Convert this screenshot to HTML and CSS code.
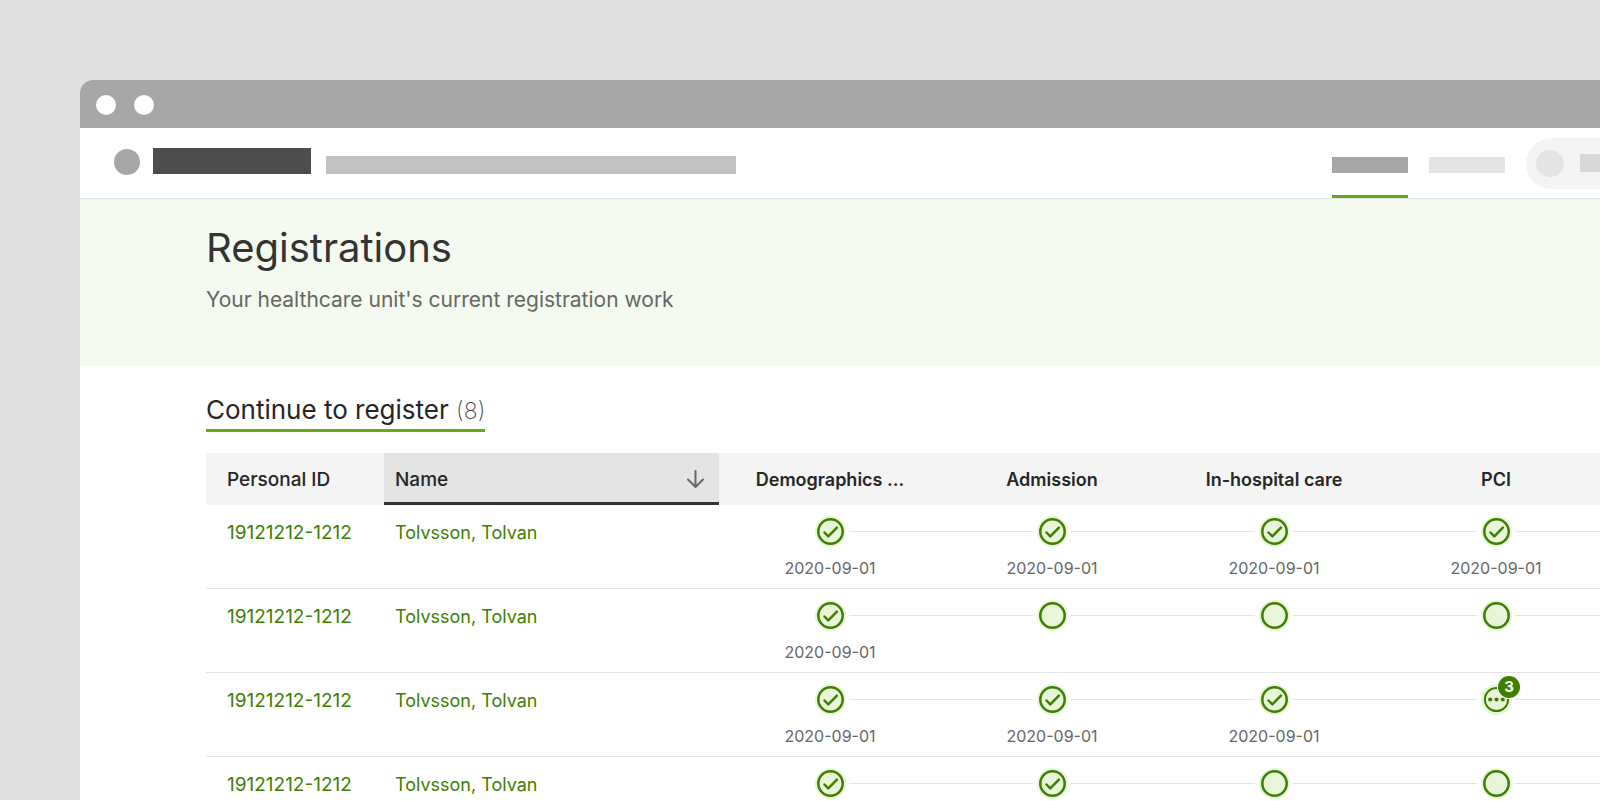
FILE: index.html
```html
<!DOCTYPE html>
<html lang="en">
<head>
<meta charset="utf-8">
<title>Registrations</title>
<link rel="stylesheet" href="styles.css">
</head>
<body>
<svg class="sprite" aria-hidden="true">
  <symbol id="done" viewBox="0 0 32 32">
    <circle cx="16.500" cy="16.500" r="15.5" fill="#e8f5d8"/>
    <circle cx="16.500" cy="16.500" r="12.2" fill="none" stroke="#3d8000" stroke-width="2.5"/>
    <path d="M10.500 17.500l3.800 3.900 8.600-8.700" fill="none" stroke="#3d8000" stroke-width="2.5" stroke-linecap="round" stroke-linejoin="round"/>
  </symbol>
  <symbol id="empty" viewBox="0 0 32 32">
    <circle cx="16.500" cy="16.500" r="15.5" fill="#e8f5d8"/>
    <circle cx="16.500" cy="16.500" r="12.2" fill="none" stroke="#3d8000" stroke-width="2.5"/>
  </symbol>
  <symbol id="partial" viewBox="0 0 32 32">
    <circle cx="16.500" cy="16.500" r="15.5" fill="#e8f5d8"/>
    <circle cx="16.500" cy="16.500" r="11.6" fill="none" stroke="#3d8000" stroke-width="2"/>
    <g fill="#3d8000"><circle cx="10.2" cy="16.500" r="2.1"/><circle cx="16.500" cy="16.500" r="2.1"/><circle cx="22.8" cy="16.500" r="2.1"/></g>
  </symbol>
</svg>
<div class="stage">
  <div class="window">
    <div class="titlebar"><span class="dot"></span><span class="dot"></span></div>
    <header class="topbar">
      <span class="logo"></span>
      <span class="brand"></span>
      <span class="tagline"></span>
      <nav class="tabs">
        <span class="tab tab-active"></span>
        <span class="tab"></span>
      </nav>
      <div class="user"><span class="avatar"></span><span class="username"></span></div>
    </header>
    <section class="hero">
      <h1>Registrations</h1>
      <p>Your healthcare unit's current registration work</p>
    </section>
    <main class="content">
      <h2>Continue to register <span class="count">(8)</span></h2>
      <table class="grid">
        <colgroup><col class="col-id"><col class="col-name"><col><col><col><col></colgroup>
        <thead>
          <tr>
            <th class="id">Personal ID</th>
            <th class="name sorted"><button type="button">Name
              <svg width="20" height="20" viewBox="0 0 20 20" fill="none" stroke="#666" stroke-width="2" stroke-linecap="round" stroke-linejoin="round" aria-hidden="true"><path d="M9.500 2v16M2 10.500L9.500 18l7.500-7.500"/></svg>
            </button></th>
            <th>Demographics ...</th><th>Admission</th><th>In-hospital care</th><th>PCI</th>
          </tr>
        </thead>
        <tbody>
          <tr>
            <td class="id"><a href="#">19121212-1212</a></td><td class="name"><a href="#">Tolvsson, Tolvan</a></td>
            <td><div class="step first"><svg class="mark"><use href="#done"/></svg></div><time>2020-09-01</time></td>
            <td><div class="step"><svg class="mark"><use href="#done"/></svg></div><time>2020-09-01</time></td>
            <td><div class="step"><svg class="mark"><use href="#done"/></svg></div><time>2020-09-01</time></td>
            <td><div class="step"><svg class="mark"><use href="#done"/></svg></div><time>2020-09-01</time></td>
          </tr>
          <tr>
            <td class="id"><a href="#">19121212-1212</a></td><td class="name"><a href="#">Tolvsson, Tolvan</a></td>
            <td><div class="step first"><svg class="mark"><use href="#done"/></svg></div><time>2020-09-01</time></td>
            <td><div class="step"><svg class="mark"><use href="#empty"/></svg></div></td>
            <td><div class="step"><svg class="mark"><use href="#empty"/></svg></div></td>
            <td><div class="step"><svg class="mark"><use href="#empty"/></svg></div></td>
          </tr>
          <tr>
            <td class="id"><a href="#">19121212-1212</a></td><td class="name"><a href="#">Tolvsson, Tolvan</a></td>
            <td><div class="step first"><svg class="mark"><use href="#done"/></svg></div><time>2020-09-01</time></td>
            <td><div class="step"><svg class="mark"><use href="#done"/></svg></div><time>2020-09-01</time></td>
            <td><div class="step"><svg class="mark"><use href="#done"/></svg></div><time>2020-09-01</time></td>
            <td><div class="step"><span class="badged"><svg class="mark"><use href="#partial"/></svg><span class="badge">3</span></span></div></td>
          </tr>
          <tr>
            <td class="id"><a href="#">19121212-1212</a></td><td class="name"><a href="#">Tolvsson, Tolvan</a></td>
            <td><div class="step first"><svg class="mark"><use href="#done"/></svg></div></td>
            <td><div class="step"><svg class="mark"><use href="#done"/></svg></div></td>
            <td><div class="step"><svg class="mark"><use href="#empty"/></svg></div></td>
            <td><div class="step"><svg class="mark"><use href="#empty"/></svg></div></td>
          </tr>
        </tbody>
      </table>
    </main>
  </div>
</div>
</body>
</html>
```
FILE: styles.css
```css
* { box-sizing: border-box; }
html { overflow: hidden; }
body {
  margin: 0;
  height: 100vh;
  padding-bottom: 1px;
  background: #fff;
  color: #262626;
  font-family: Inter, "Liberation Sans", sans-serif;
  overflow: hidden;
}
.sprite { display: none; }
.stage {
  height: 100%;
  padding: 80px 0 0 80px;
  background: #e0e0e0;
  overflow: hidden;
}
.window {
  height: 100%;
  background: #fff;
  border-top-left-radius: 13px;
  overflow: hidden;
}
.titlebar {
  display: flex;
  align-items: center;
  gap: 18px;
  height: 48px;
  padding: 1px 16px 0;
  background: #a6a6a6;
}
.dot { width: 20px; height: 20px; border-radius: 50%; background: #fff; }

.topbar {
  display: flex;
  height: 71px;
  border-bottom: 1px solid #e4e4e4;
}
.topbar > * { flex: none; }
.logo { width: 26px; height: 26px; margin: 21px 13px 0 34px; border-radius: 50%; background: #a6a6a6; }
.brand { width: 158px; height: 26px; margin: 20px 15px 0 0; background: #4d4d4d; }
.tagline { width: 410px; height: 18px; margin-top: 28px; background: #c2c2c2; }
.tabs { display: flex; gap: 21px; margin-left: auto; }
.tab { width: 76px; }
.tab::before { content: ""; display: block; height: 16px; margin-top: 29px; background: #e4e4e4; }
.tab-active { border-bottom: 3px solid #65a818; }
.tab-active::before { background: #a6a6a6; }
.user {
  display: flex;
  align-items: center;
  gap: 16px;
  width: 74px;
  height: 51px;
  margin: 10px 0 0 21px;
  padding: 0 0 1px 10px;
  border-radius: 26px 0 0 26px;
  background: #f4f4f4;
  overflow: hidden;
}
.avatar { flex: none; width: 28px; height: 27px; border-radius: 50%; background: #e4e4e4; }
.username { flex: none; width: 80px; height: 18px; background: #d8d8d8; }

.hero { height: 167px; padding: 21px 126px 0; background: #f4faf0; }
h1 { margin: 0; font-size: 40px; line-height: 56px; font-weight: 400; color: #333; }
.hero p { margin: 11px 0 0; font-size: 21px; line-height: 26px; color: #666; }

.content { padding: 28px 0 0 126px; }
h2 {
  width: fit-content;
  margin: 0 0 21px;
  padding-bottom: 4px;
  border-bottom: 3px solid #65a818;
  font-size: 26px;
  line-height: 31px;
  font-weight: 400;
}
.count { font-size: 23px; line-height: 1; font-weight: 200; color: #444; }

.grid {
  width: 100%;
  min-width: 1401px;
  border-collapse: separate;
  border-spacing: 0;
  table-layout: fixed;
}
.col-id { width: 178px; }
.col-name { width: 335px; }
th {
  height: 52px;
  padding: 0;
  background: #f4f4f4;
  font-size: 18px;
  font-weight: 600;
  text-align: center;
}
th.id, th.name { font-size: 19px; font-weight: 500; }
.id { padding-left: 21px; text-align: left; }
.name { text-align: left; }
td.name { padding-left: 11px; }
.sorted { background: #e4e4e4; border-bottom: 3px solid #333; }
.sorted button {
  display: flex;
  align-items: center;
  justify-content: space-between;
  width: 100%;
  height: 49px;
  padding: 3px 13px 0 11px;
  border: 0;
  background: none;
  color: inherit;
  font: inherit;
}
td {
  height: 84px;
  padding: 10px 0 0;
  border-bottom: 1px solid #e4e4e4;
  vertical-align: top;
  font-size: 18px;
  line-height: 32px;
  text-align: center;
}
td.id, td.name { padding-top: 12px; }
td.id { font-size: 19px; }
td a { color: #3d8000; text-decoration: none; }
.step { display: flex; align-items: center; gap: 3px; height: 32px; }
.step::before, .step::after { content: ""; flex: 1; height: 1px; background: #e4e4e4; }
.first::before { background: none; }
.mark { display: block; width: 32px; height: 32px; overflow: visible; }
.badged { position: relative; }
.badge {
  position: absolute;
  top: -7px;
  right: -8px;
  width: 22px;
  height: 22px;
  border-radius: 50%;
  background: #3d8000;
  box-shadow: 0 0 0 1px #fff;
  color: #fff;
  font-size: 15px;
  line-height: 22px;
  font-weight: 700;
}
time { display: block; margin-top: 11px; font-size: 16px; line-height: 20px; color: #666; }
```
